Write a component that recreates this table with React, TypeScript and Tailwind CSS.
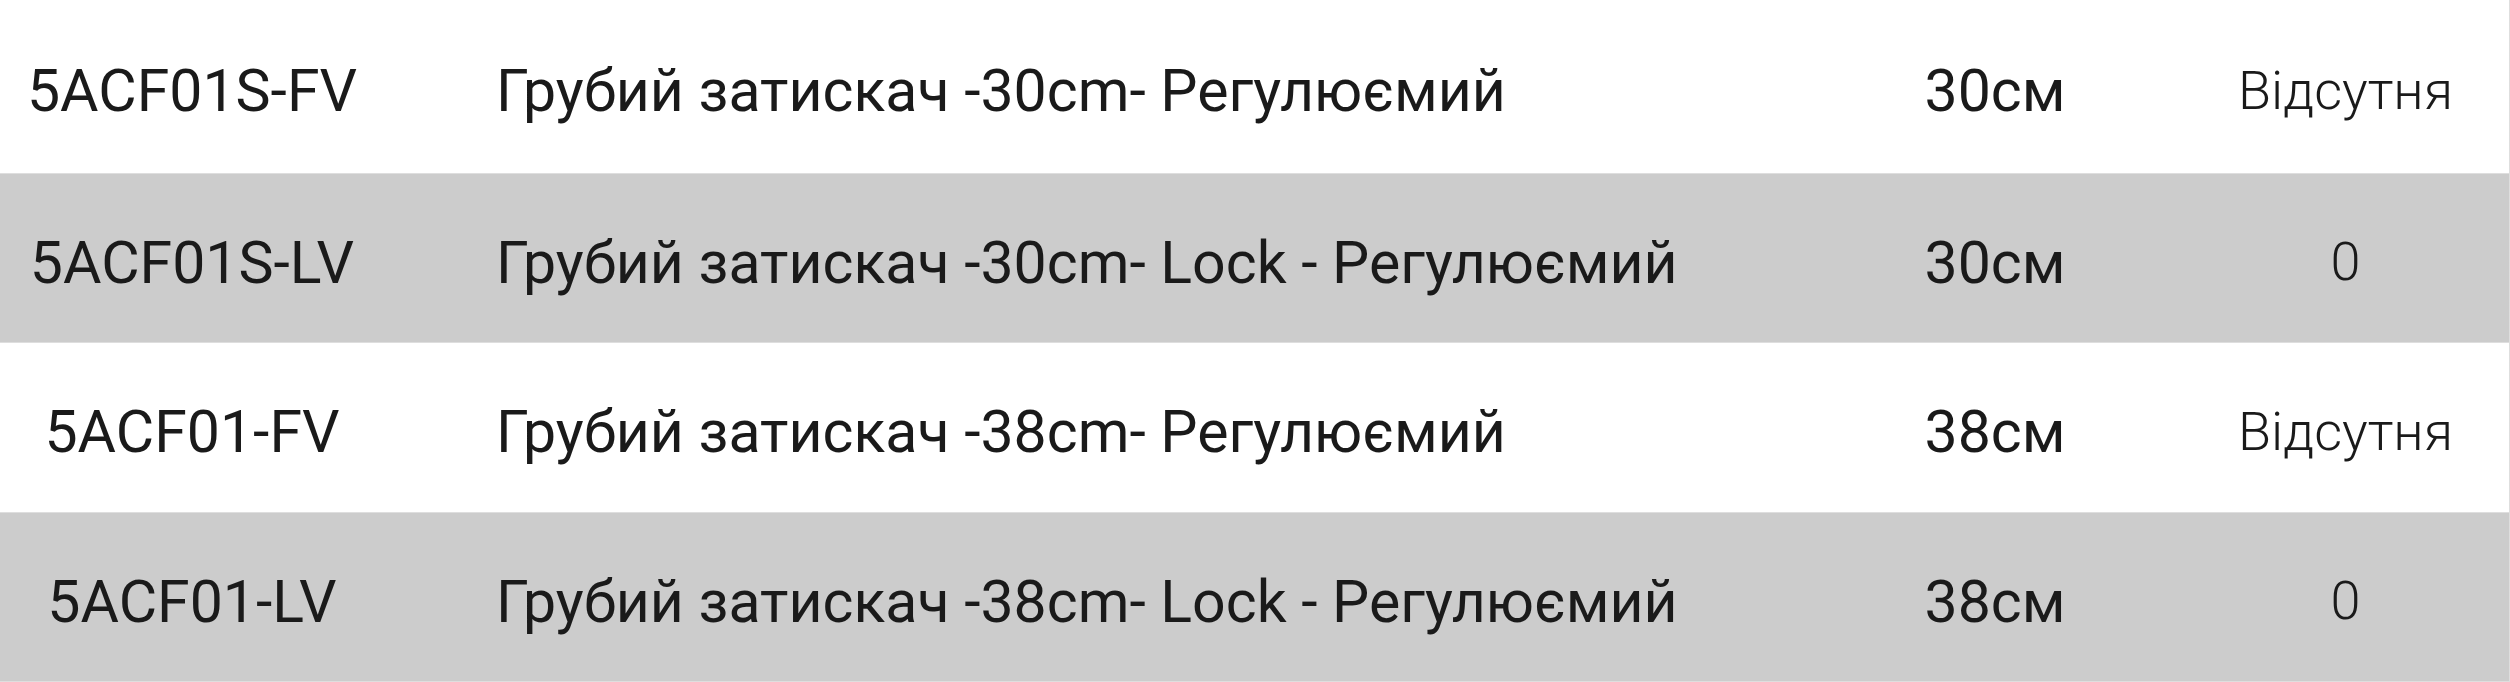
import React from "react";

type Row = { code: string; name: string; size: string; extra: string; gray: boolean; h: string };

const rows: Row[] = [
  { code: "5ACF01S-FV", name: "Грубий затискач -30cm- Регулюємий", size: "30см", extra: "Відсутня", gray: false, h: "h-[174px]" },
  { code: "5ACF01S-LV", name: "Грубий затискач -30cm- Lock - Регулюємий", size: "30см", extra: "0", gray: true, h: "h-[169px]" },
  { code: "5ACF01-FV", name: "Грубий затискач -38cm- Регулюємий", size: "38см", extra: "Відсутня", gray: false, h: "h-[170px]" },
  { code: "5ACF01-LV", name: "Грубий затискач -38cm- Lock - Регулюємий", size: "38см", extra: "0", gray: true, h: "h-[169px]" },
];

export default function App() {
  return (
    <div
      className="w-[2510px] h-[682px] overflow-hidden bg-white text-[#1a1a1a]"
      style={{ fontFamily: "Roboto, 'Noto Sans', sans-serif" }}
    >
      {rows.map((r, i) => (
        <div
          key={i}
          className={`flex items-center ${r.h} border-b border-r border-[#dedede] ${r.gray ? "bg-[#cccccc]" : "bg-white"}`}
        >
          <div className="w-[384px] flex justify-center text-[59px] leading-none pt-[8px]">{r.code}</div>
          <div className="w-[1424px] pl-[112px] text-[59px] leading-none pt-[8px] whitespace-nowrap">{r.name}</div>
          <div className="w-[374px] flex justify-center text-[59px] leading-none pt-[8px]">{r.size}</div>
          <div className="flex-1 flex justify-center text-[54px] font-light leading-none pt-[8px]">{r.extra}</div>
        </div>
      ))}
    </div>
  );
}
